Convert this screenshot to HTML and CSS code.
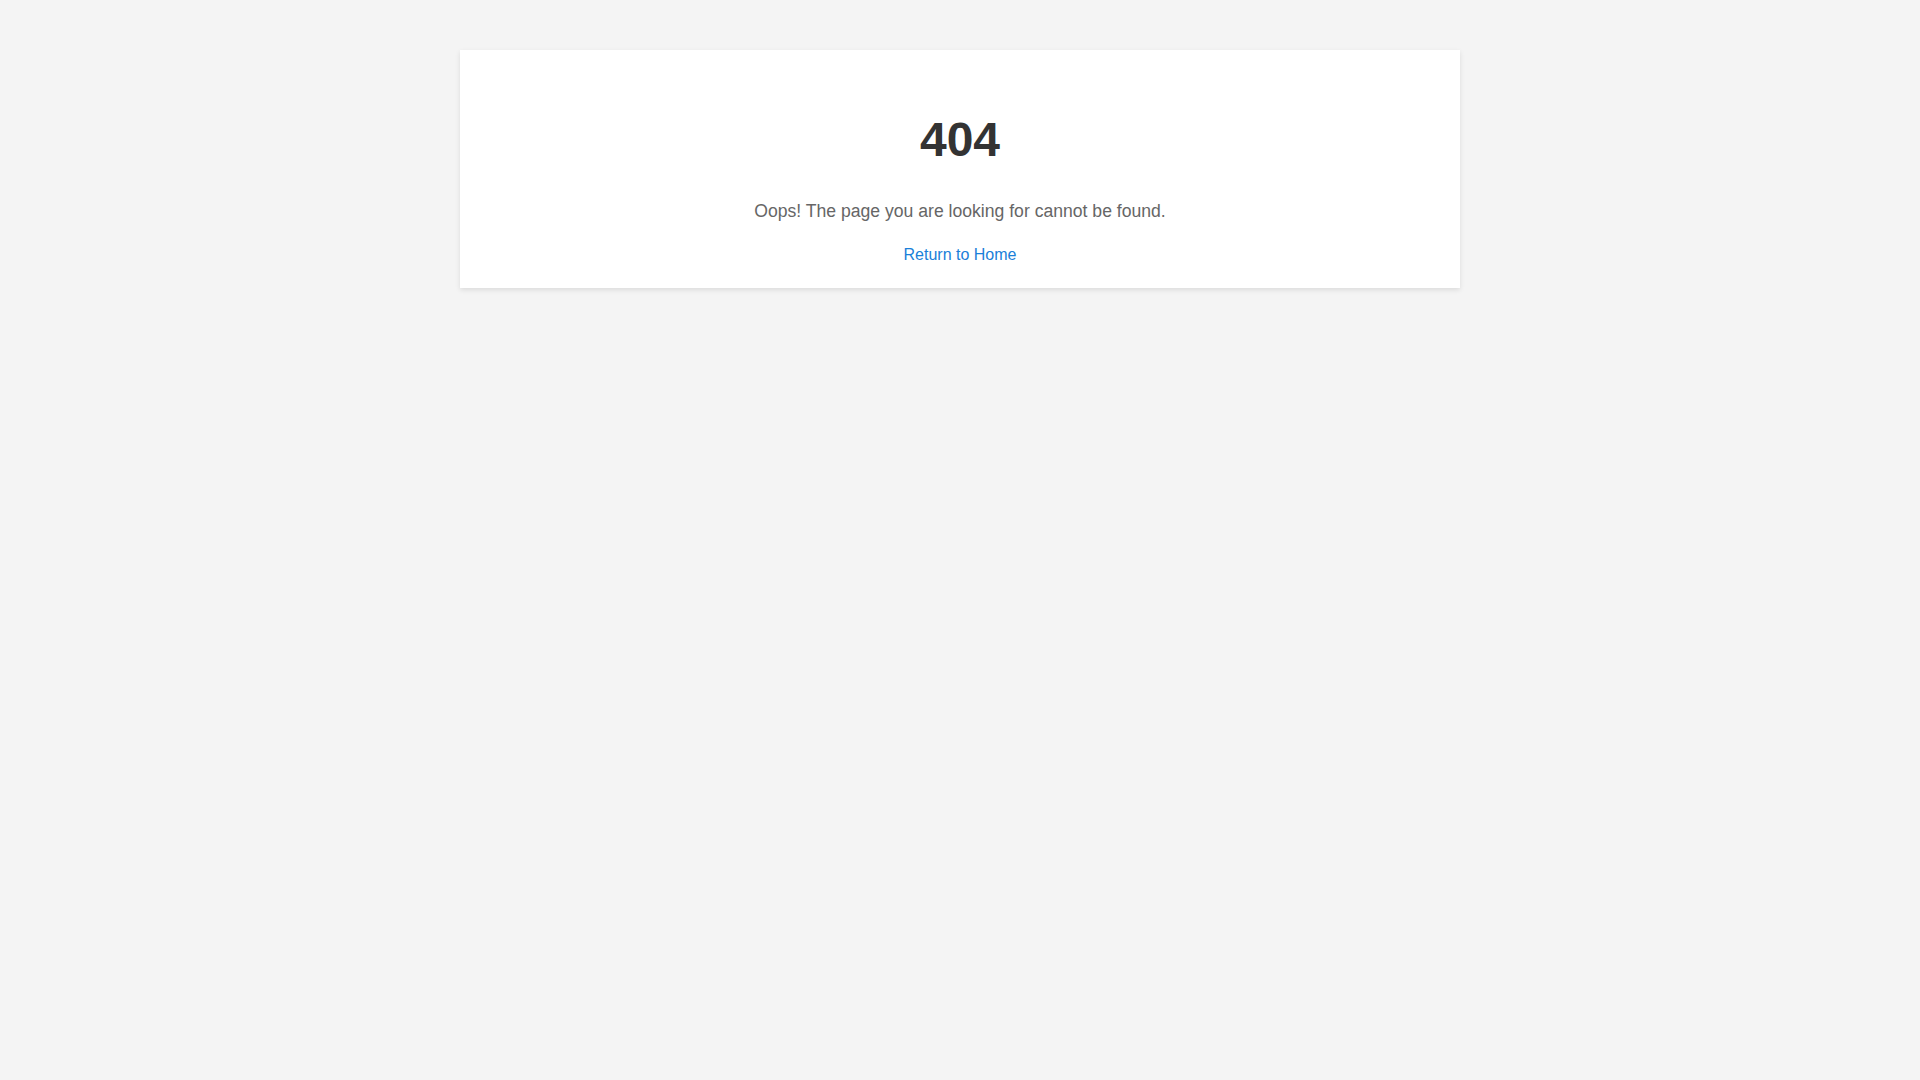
FILE: index.html
```html
<!DOCTYPE html>
<html>
  <head>
    <title>Page Not Found</title>
    <link rel="stylesheet" href="styles.css">
  </head>
  <body>
    <div class="container">
      <h1>404</h1>
      <p>Oops! The page you are looking for cannot be found.</p>
      <a href="/" class="home-link">Return to Home</a>
    </div>
  </body>
</html>
```

FILE: styles.css
```css
body {
  margin: 0;
  background-color: #f4f4f4;
  font-family: "Liberation Sans", Arial, sans-serif;
  color: #333;
}

.container {
  box-sizing: border-box;
  max-width: 1000px;
  margin: 50px auto;
  padding: 30px 20px 24px 20px;
  background-color: #fff;
  box-shadow: 0 2px 5px rgba(0, 0, 0, 0.1);
  text-align: center;
}

.container h1 {
  font-size: 48px;
  margin: 32px 0 34px 0;
  color: #333;
}

.container p {
  font-size: 1.1em;
  margin: 18px 0;
  color: #666;
}

.home-link {
  display: inline-block;
  margin-top: 6px;
  font-size: 16px;
  color: #1a80d9;
  text-decoration: none;
}
```
